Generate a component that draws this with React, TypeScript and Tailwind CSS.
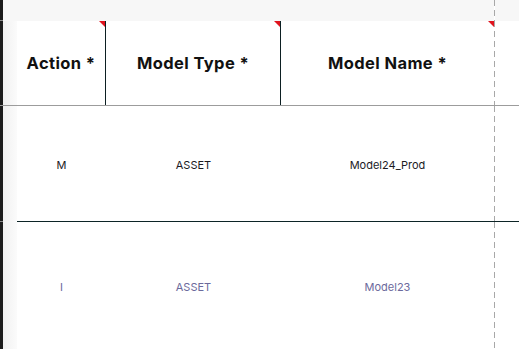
import React from 'react';

const dashed =
  'w-px bg-[repeating-linear-gradient(to_bottom,#a8a8a8_0px,#a8a8a8_6px,transparent_6px,transparent_10px)]';

const Flag = () => (
  <svg className="absolute top-0 right-0" width="6" height="6" viewBox="0 0 6 6">
    <polygon points="0,0 6,0 6,6" fill="#e0141e" />
  </svg>
);

const headers = [
  { label: 'Action *', width: 'w-[89px]', border: 'border-r border-[#0c1f22]' },
  { label: 'Model Type *', width: 'w-[175px]', border: 'border-r border-[#0c1f22]' },
  { label: 'Model Name *', width: 'w-[213px]', border: '' },
];

const rows = [
  { cells: ['M', 'ASSET', 'Model24_Prod'], color: 'text-[#1b1b1f]' },
  { cells: ['I', 'ASSET', 'Model23'], color: 'text-[#6c6a9c]' },
];

const widths = ['w-[89px]', 'w-[175px]', 'w-[213px]'];

const Bar = ({ tick = true }: { tick?: boolean }) => (
  <div className="w-[3px] flex flex-col shrink-0">
    <div className="flex-1 bg-[#1c1c1c]" />
    {tick && <div className="h-px bg-[#8a8a8a]" />}
  </div>
);

export default function App() {
  return (
    <div className="w-[519px] h-[349px] flex flex-col overflow-hidden bg-white font-['Inter',sans-serif]">
      {/* top strip */}
      <div className="h-[21px] flex shrink-0">
        <Bar />
        <div className="w-[491px] bg-[#f7f7f7]" />
        <div className={dashed} />
        <div className="flex-1 bg-[#f7f7f7]" />
      </div>

      {/* header */}
      <div className="h-[85px] flex shrink-0 border-b border-[#9c9c9c]">
        <Bar tick={false} />
        <div className="w-[14px] bg-gradient-to-r from-[#f1f1f1] to-[#fbfbfb]" />
        {headers.map((h) => (
          <div
            key={h.label}
            className={`relative ${h.width} ${h.border} flex items-center justify-center text-[16.5px] font-bold text-[#111] tracking-[0.4px]`}
          >
            {h.label}
            <Flag />
          </div>
        ))}
        <div className={dashed} />
        <div className="flex-1" />
      </div>

      {rows.map((r, i) => (
        <div key={i} className={`flex ${i === 0 ? 'h-[116px] shrink-0' : 'flex-1'}`}>
          <Bar tick={i === 0} />
          <div className="w-[14px] bg-gradient-to-r from-[#f1f1f1] to-[#fbfbfb]" />
          <div className={`flex-1 flex ${i === 0 ? 'border-b border-[#0c2426]' : ''}`}>
            {r.cells.map((c, j) => (
              <div
                key={j}
                className={`${widths[j]} flex items-center justify-center pt-[4px] text-[11px] ${r.color}`}
              >
                {c}
              </div>
            ))}
            <div className={dashed} />
            <div className="flex-1" />
          </div>
        </div>
      ))}
    </div>
  );
}
